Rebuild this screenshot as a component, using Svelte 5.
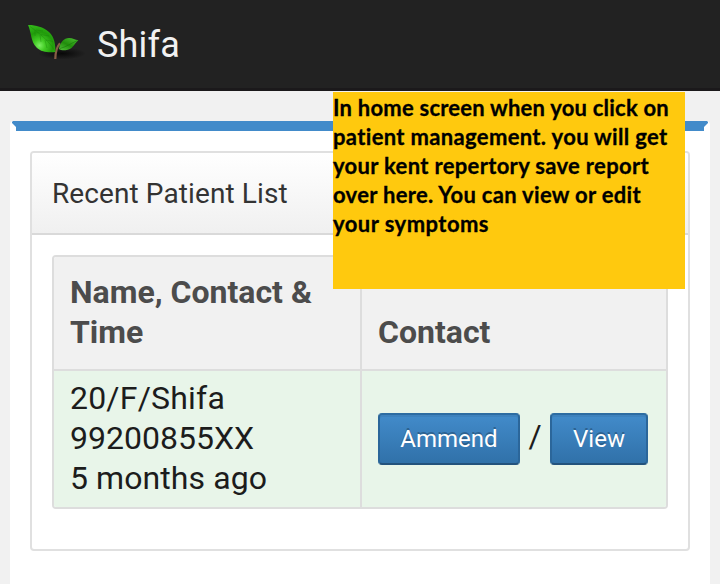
<script>
  const note = [
    { text: 'In home screen when you click on', width: 336 },
    { text: 'patient management. you will get', width: 335 },
    { text: 'your kent repertory save report', width: 316 },
    { text: 'over here. You can view or edit', width: 308 },
    { text: 'your symptoms', width: 156 }
  ];
  const patients = [{ name: '20/F/Shifa', phone: '99200855XX', time: '5 months ago' }];

  // Keeps each line of the note at its set width.
  function fit(node, width) {
    const gaps = node.textContent.length;
    const natural = node.getBoundingClientRect().width;
    node.style.letterSpacing = `${(width - natural) / gaps}px`;
  }
</script>

<div class="page">
  <header class="navbar">
    <svg class="logo" width="62" height="44" viewBox="0 0 62 44" aria-hidden="true">
      <defs>
        <radialGradient id="leafLarge" cx="42%" cy="75%" r="75%">
          <stop offset="0" stop-color="#7cee62" />
          <stop offset=".28" stop-color="#42cb24" />
          <stop offset=".65" stop-color="#219b0b" />
          <stop offset="1" stop-color="#32b719" />
        </radialGradient>
        <linearGradient id="leafSmall" x1="0" y1="1" x2=".8" y2="0">
          <stop offset="0" stop-color="#55c53c" />
          <stop offset=".5" stop-color="#218d0c" />
          <stop offset="1" stop-color="#46b92d" />
        </linearGradient>
        <radialGradient id="shade">
          <stop offset="0" stop-color="#050505" stop-opacity=".9" />
          <stop offset="1" stop-color="#050505" stop-opacity="0" />
        </radialGradient>
      </defs>
      <ellipse cx="39" cy="33.5" rx="24" ry="6" fill="url(#shade)" />
      <path d="M32.3 39C32.4 32 33.5 27 37 23.2" fill="none" stroke="#885e46" stroke-width="2.2" />
      <path d="M5 5C12 4.8 20 6.8 26 12C31.5 17 32.6 25 32.4 32C26 32.7 18.5 32.4 13.5 27.5C7.5 21.5 8.5 12 5 5Z" fill="url(#leafLarge)" />
      <path d="M7 6.5C15 12 27 22 32 31M13 10L20 11M18 14.5L26 16M23 20L30 21.5M12 10L12 16M17 15L18 22M22 20L24 28" fill="none" stroke="#137b05" stroke-width=".6" opacity=".55" />
      <path d="M36 29C37 22.5 41 18.3 46 18.1C49.5 18 52 20 55.3 20.2C51 24 49.5 29.8 42.5 30.2C39.5 30.3 37 30 36 29Z" fill="url(#leafSmall)" />
      <path d="M37 28.5C43 27 48.5 23 54.5 20.5" fill="none" stroke="#0f7504" stroke-width=".7" opacity=".75" />
    </svg>
    <span class="brand">Shifa</span>
  </header>

  <main class="box">
    <section class="panel">
      <h1>Recent Patient List</h1>
      <div class="content">
        <table>
          <thead>
            <tr><th>Name, Contact &amp; Time</th><th>Contact</th></tr>
          </thead>
          <tbody>
            {#each patients as p}
              <tr>
                <td><span class="name">{p.name}</span><br />{p.phone}<br /><span class="time">{p.time}</span></td>
                <td>
                  <div class="actions"><button class="amend">Ammend</button><span>/</span><button class="view">View</button></div>
                </td>
              </tr>
            {/each}
          </tbody>
        </table>
      </div>
    </section>
  </main>

  <aside class="note">
    {#each note as line}
      <div><span use:fit={line.width}>{line.text}</span></div>
    {/each}
  </aside>
</div>

<style>
  .page {
    position: relative;
    width: 720px;
    height: 584px;
    overflow: hidden;
    background: #f1f1f1;
    font-family: Roboto, "Liberation Sans", sans-serif;
    color: #1c1c1c;
  }
  .navbar {
    box-sizing: border-box;
    height: 91px;
    display: flex;
    align-items: flex-start;
    padding: 20px 0 0 23px;
    background: #222;
    border-bottom: 3px solid #1b191b;
  }
  .brand {
    margin-left: 12px;
    font-size: 36px;
    line-height: 50px;
    letter-spacing: .2px;
    color: #f1f1f1;
  }
  .box {
    box-sizing: border-box;
    height: 480px;
    margin: 30px 10px 0;
    padding: 0 20px;
    background: #fff;
    border-radius: 4px 4px 0 0;
  }
  .box::before {
    content: "";
    display: block;
    height: 10px;
    margin: 0 -18px 20px;
    background: #428bca;
    clip-path: polygon(1px 0, calc(100% - 1px) 0, 100% 1px, 100% 2px, calc(100% - 4px) 6px, calc(100% - 4px) 100%, 4px 100%, 4px 6px, 0 2px, 0 1px);
  }
  .panel {
    box-sizing: border-box;
    height: 400px;
    border: 2px solid #e0e0e0;
    border-radius: 4px;
    overflow: hidden;
  }
  h1 {
    box-sizing: border-box;
    height: 82px;
    margin: 0;
    padding-left: 20px;
    font-size: 28px;
    font-weight: 400;
    line-height: 81px;
    letter-spacing: .1px;
    color: #333;
    background: linear-gradient(#fff, #f0f0f0);
    border-bottom: 2px solid #d9d9d9;
  }
  .content { padding: 20px; }
  table {
    width: 616px;
    table-layout: fixed;
    border: 2px solid #ddd;
    border-radius: 4px;
    border-spacing: 0;
    overflow: hidden;
  }
  th, td {
    box-sizing: border-box;
    padding: 7px 16px 9px;
    text-align: left;
    font-size: 32px;
    line-height: 40px;
  }
  th:first-child, td:first-child { width: 306px; }
  th + th, td + td { border-left: 2px solid #ddd; }
  td + td { padding: 8px 16px; }
  th {
    height: 112px;
    padding: 15px 16px 17px;
    vertical-align: bottom;
    color: #4c4c4c;
    background: #f1f1f1;
  }
  td {
    height: 138px;
    background: #e8f5e9;
    border-top: 2px solid #ddd;
  }
  .name { letter-spacing: .2px; }
  .time { letter-spacing: .08px; }
  .actions { display: flex; align-items: center; }
  .actions span { width: 30px; padding-bottom: 6px; text-align: center; }
  button {
    box-sizing: border-box;
    height: 52px;
    padding: 0;
    border: 2px solid;
    border-color: #2d6ca2 #2b669a #23527c;
    border-radius: 4px;
    background: linear-gradient(#428bca, #3071a9);
    box-shadow: inset 0 2px 0 rgba(0, 0, 0, .06);
    color: #fff;
    font: 24px/46px Roboto, "Liberation Sans", sans-serif;
    text-shadow: 0 -2px 0 rgba(0, 0, 0, .25);
  }
  .amend { width: 142px; }
  .view { width: 98px; }
  .note {
    position: absolute;
    left: 333px;
    top: 92px;
    box-sizing: border-box;
    width: 352px;
    height: 197px;
    padding-top: 1px;
    background: #ffc90e;
    color: #000;
    font: 700 22px/29px Lato, "Open Sans", sans-serif;
    -webkit-text-stroke: .3px #000;
    white-space: nowrap;
  }
</style>
